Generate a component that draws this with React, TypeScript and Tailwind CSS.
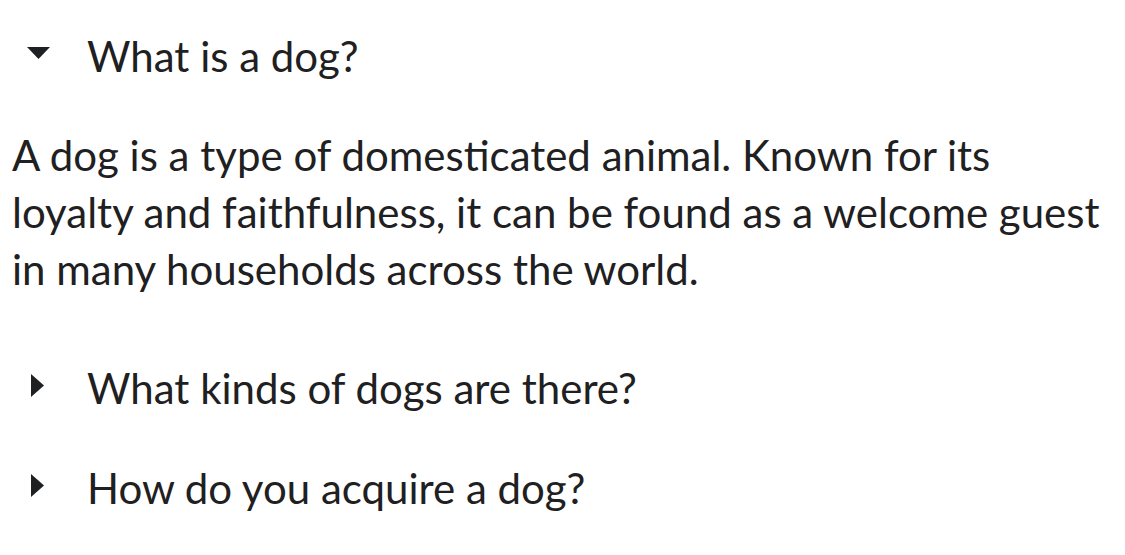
import { useState } from "react";

const items = [
  {
    title: "What is a dog?",
    body: "A dog is a type of domesticated animal. Known for its loyalty and faithfulness, it can be found as a welcome guest in many households across the world.",
  },
  {
    title: "What kinds of dogs are there?",
    body: "There are many breeds of dogs. Each breed varies in size and temperament. Owners often select a breed of dog that they find to be compatible with their own lifestyle and desires from a companion.",
  },
  {
    title: "How do you acquire a dog?",
    body: "Three common ways for a prospective owner to acquire a dog is from pet shops, private owners, or shelters.",
  },
];

export default function App() {
  const [open, setOpen] = useState(0);

  return (
    <div
      className="min-h-screen bg-white px-[12px] pt-[6px] text-[#1f2021]"
      style={{ fontFamily: "Lato, 'Helvetica Neue', Arial, sans-serif" }}
    >
      {items.map((item, i) => {
        const active = open === i;
        return (
          <div key={item.title}>
            {/* Title */}
            <button
              onClick={() => setOpen(active ? -1 : i)}
              className="flex w-full items-start py-[21.5px] text-left text-[42px] leading-[57px] cursor-pointer"
            >
              <span className="flex h-[57px] w-[75px] shrink-0 justify-start">
                {active ? (
                  <svg width="23" height="12" viewBox="0 0 23 12" className="ml-[15px] mt-[19px]">
                    <polygon points="0,0 23,0 11.5,12" fill="#1f2021" />
                  </svg>
                ) : (
                  <svg width="13" height="23" viewBox="0 0 13 23" className="ml-[19px] mt-[14.5px]">
                    <polygon points="0,0 13,11.5 0,23" fill="#1f2021" />
                  </svg>
                )}
              </span>
              <span>{item.title}</span>
            </button>
            {/* Content */}
            {active && (
              <p className="pt-[21px] pb-[40px] text-[42px] leading-[57px]">{item.body}</p>
            )}
          </div>
        );
      })}
    </div>
  );
}
